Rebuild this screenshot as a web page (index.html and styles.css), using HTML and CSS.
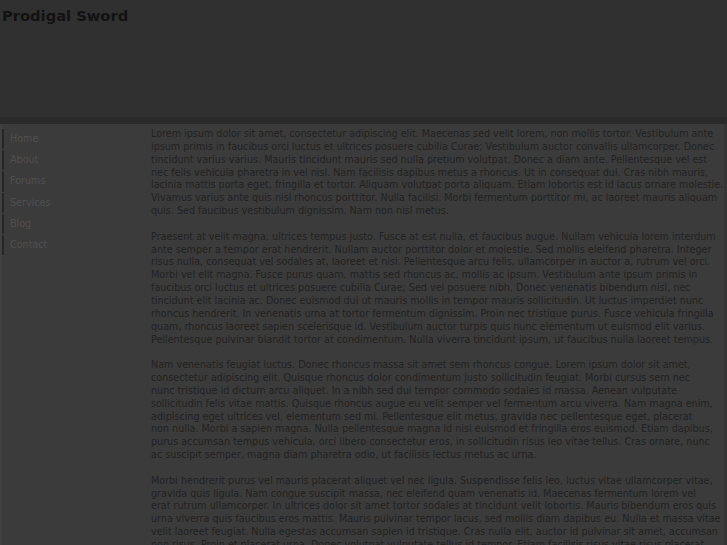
FILE: index.html
```html
<!DOCTYPE html>
<html>
<head>
<meta charset="utf-8">
<title>Prodigal Sword</title>
<link rel="stylesheet" href="styles.css">
</head>
<body>
<div class="header">
  <h1 class="title">Prodigal Sword</h1>
</div>
<div class="bar"></div>
<div class="main">
  <ul class="nav">
    <li class="nav-item">Home</li>
    <li class="nav-item">About</li>
    <li class="nav-item">Forums</li>
    <li class="nav-item">Services</li>
    <li class="nav-item">Blog</li>
    <li class="nav-item">Contact</li>
  </ul>
  <div class="content">
    <p>Lorem ipsum dolor sit amet, consectetur adipiscing elit. Maecenas sed velit lorem, non mollis tortor. Vestibulum ante<br>
ipsum primis in faucibus orci luctus et ultrices posuere cubilia Curae; Vestibulum auctor convallis ullamcorper. Donec<br>
tincidunt varius varius. Mauris tincidunt mauris sed nulla pretium volutpat. Donec a diam ante. Pellentesque vel est<br>
nec felis vehicula pharetra in vel nisl. Nam facilisis dapibus metus a rhoncus. Ut in consequat dui. Cras nibh mauris,<br>
lacinia mattis porta eget, fringilla et tortor. Aliquam volutpat porta aliquam. Etiam lobortis est id lacus ornare molestie.<br>
Vivamus varius ante quis nisl rhoncus porttitor. Nulla facilisi. Morbi fermentum porttitor mi, ac laoreet mauris aliquam<br>
quis. Sed faucibus vestibulum dignissim. Nam non nisl metus.</p>
    <p>Praesent at velit magna, ultrices tempus justo. Fusce at est nulla, et faucibus augue. Nullam vehicula lorem interdum<br>
ante semper a tempor erat hendrerit. Nullam auctor porttitor dolor et molestie. Sed mollis eleifend pharetra. Integer<br>
risus nulla, consequat vel sodales at, laoreet et nisi. Pellentesque arcu felis, ullamcorper in auctor a, rutrum vel orci.<br>
Morbi vel elit magna. Fusce purus quam, mattis sed rhoncus ac, mollis ac ipsum. Vestibulum ante ipsum primis in<br>
faucibus orci luctus et ultrices posuere cubilia Curae; Sed vel posuere nibh. Donec venenatis bibendum nisl, nec<br>
tincidunt elit lacinia ac. Donec euismod dui ut mauris mollis in tempor mauris sollicitudin. Ut luctus imperdiet nunc<br>
rhoncus hendrerit. In venenatis urna at tortor fermentum dignissim. Proin nec tristique purus. Fusce vehicula fringilla<br>
quam, rhoncus laoreet sapien scelerisque id. Vestibulum auctor turpis quis nunc elementum ut euismod elit varius.<br>
Pellentesque pulvinar blandit tortor at condimentum. Nulla viverra tincidunt ipsum, ut faucibus nulla laoreet tempus.</p>
    <p>Nam venenatis feugiat luctus. Donec rhoncus massa sit amet sem rhoncus congue. Lorem ipsum dolor sit amet,<br>
consectetur adipiscing elit. Quisque rhoncus dolor condimentum justo sollicitudin feugiat. Morbi cursus sem nec<br>
nunc tristique id dictum arcu aliquet. In a nibh sed dui tempor commodo sodales id massa. Aenean vulputate<br>
sollicitudin felis vitae mattis. Quisque rhoncus augue eu velit semper vel fermentum arcu viverra. Nam magna enim,<br>
adipiscing eget ultrices vel, elementum sed mi. Pellentesque elit metus, gravida nec pellentesque eget, placerat<br>
non nulla. Morbi a sapien magna. Nulla pellentesque magna id nisl euismod et fringilla eros euismod. Etiam dapibus,<br>
purus accumsan tempus vehicula, orci libero consectetur eros, in sollicitudin risus leo vitae tellus. Cras ornare, nunc<br>
ac suscipit semper, magna diam pharetra odio, ut facilisis lectus metus ac urna.</p>
    <p>Morbi hendrerit purus vel mauris placerat aliquet vel nec ligula. Suspendisse felis leo, luctus vitae ullamcorper vitae,<br>
gravida quis ligula. Nam congue suscipit massa, nec eleifend quam venenatis id. Maecenas fermentum lorem vel<br>
erat rutrum ullamcorper. In ultrices dolor sit amet tortor sodales at tincidunt velit lobortis. Mauris bibendum eros quis<br>
urna viverra quis faucibus eros mattis. Mauris pulvinar tempor lacus, sed mollis diam dapibus eu. Nulla et massa vitae<br>
velit laoreet feugiat. Nulla egestas accumsan sapien id tristique. Cras nulla elit, auctor id pulvinar sit amet, accumsan<br>
non risus. Proin et placerat urna. Donec volutpat vulputate tellus id tempor. Etiam facilisis risus vitae risus placerat<br>
faucibus. Nulla facilisi. Sed posuere dui nec arcu pretium a pretium lorem pellentesque.</p>
  </div>
</div>
</body>
</html>
```

FILE: styles.css
```css
html, body {
  margin: 0;
  padding: 0;
  background: #3b3b3b;
  font-family: "DejaVu Sans", Verdana, sans-serif;
}

.header {
  background: #303030;
  height: 117px;
  padding-left: 2px;
  overflow: hidden;
}

.title {
  margin: 7px 0 0 0;
  font-size: 14.7px;
  font-weight: bold;
  color: #121212;
}

.bar {
  height: 7px;
  background: #2a2a2a;
}

.main {
  display: flex;
  align-items: flex-start;
  border-left: 2px solid #404040;
  border-right: 3px solid #353535;
  min-height: 421px;
  overflow: hidden;
}

.nav {
  list-style: none;
  margin: 5px 0 0 0;
  padding: 0;
  width: 149px;
  flex: none;
}

.nav-item {
  border-left: 2px solid #262626;
  margin-bottom: 1px;
  height: 20.2px;
  line-height: 20px;
  padding-left: 6px;
  font-size: 9.6px;
  color: #4f4f4f;
}

.content {
  flex: 1;
  min-width: 0;
  padding: 4px 0 0 0;
  font-size: 9.6px;
  line-height: 12.85px;
  color: #222222;
}

.content p {
  margin: 0 0 12.85px 0;
  white-space: nowrap;
}
```
